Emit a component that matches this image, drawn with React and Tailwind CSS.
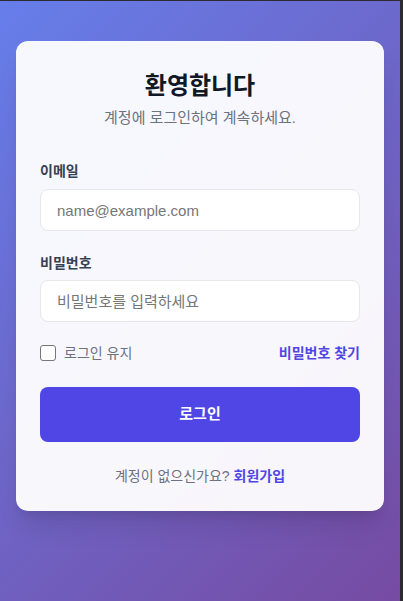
import React, { useState } from 'react';

const App = () => {
  const [remember, setRemember] = useState(false);

  return (
    <div className="w-[403px] h-[601px] bg-[#2b2b31] pr-[3px] pt-px">
      <div
        className="h-full bg-[linear-gradient(135deg,#667eea_0%,#764ba2_100%)] px-4 pt-[40px]"
        style={{ fontFamily: '"Liberation Sans", "Noto Sans CJK KR", sans-serif' }}
      >
        <div className="bg-white/95 rounded-xl shadow-xl px-6 pt-[29px] pb-[25px]">
          <h1 className="text-center text-[24px] leading-[32px] font-bold text-[#111827]">환영합니다</h1>
          <p className="mt-[5px] text-center text-[15px] leading-[22px] text-[#6b7280]">계정에 로그인하여 계속하세요.</p>

          <div className="mt-8">
            <label className="block text-sm leading-5 font-semibold text-[#374151]">이메일</label>
            <input
              type="email"
              placeholder="name@example.com"
              className="mt-2 block w-full h-[42px] px-4 text-[15px] bg-white border border-[#e5e7eb] rounded-lg placeholder:text-[#767676] focus:outline-none"
            />
          </div>

          <div className="mt-[22px]">
            <label className="block text-sm leading-5 font-semibold text-[#374151]">비밀번호</label>
            <input
              type="password"
              placeholder="비밀번호를 입력하세요"
              className="mt-[7px] block w-full h-[42px] px-4 text-[15px] bg-white border border-[#e5e7eb] rounded-lg placeholder:text-[#767676] focus:outline-none"
            />
          </div>

          <div className="mt-[21px] flex items-center justify-between">
            <label className="flex items-center gap-2 text-sm leading-5 text-[#6b7280]">
              <input
                type="checkbox"
                checked={remember}
                onChange={(e) => setRemember(e.target.checked)}
                className="appearance-none w-4 h-4 border border-[#767676] rounded-[3px] bg-white"
              />
              로그인 유지
            </label>
            <a href="#" className="text-sm leading-5 font-semibold text-[#4f46e5]">비밀번호 찾기</a>
          </div>

          <button className="mt-[24px] w-full h-[55px] rounded-lg bg-[#4f46e5] text-white text-[15px] font-bold">
            로그인
          </button>

          <p className="mt-[24px] text-center text-sm leading-5 text-[#6b7280]">
            계정이 없으신가요? <a href="#" className="font-bold text-[#4f46e5]">회원가입</a>
          </p>
        </div>
      </div>
    </div>
  );
};

export default App;
